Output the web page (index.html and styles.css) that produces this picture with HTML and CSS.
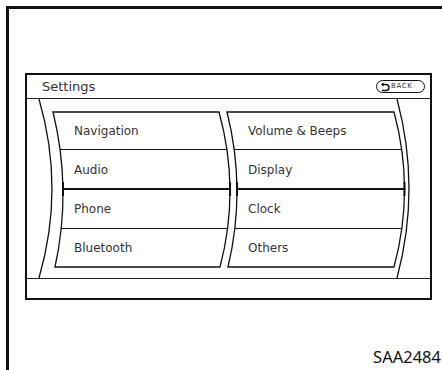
FILE: index.html
```html
<!DOCTYPE html>
<html lang="en">
<head>
    <meta charset="UTF-8">
    <meta name="viewport" content="width=device-width, initial-scale=1.0">
    <title>Settings</title>
    <link rel="stylesheet" href="styles.css">
</head>
<body>
    <div class="frame">
        <div class="screen">
            <div class="screen-head">
                <span class="screen-title">Settings</span>
                <span class="back-btn">
                    <svg class="back-icon" viewBox="0 0 10 10" width="10" height="10">
                        <path d="M2.5 2.5 H6 A3 3 0 0 1 6 8.5 H2" fill="none" stroke="#111" stroke-width="1.4"/>
                        <path d="M0.8 2.5 L3.6 0.6 V4.4 Z" fill="#111"/>
                    </svg>
                    <span class="back-text">BACK</span>
                </span>
            </div>
            <div class="screen-body">
                <!-- drum outline, drawn under the menu text -->
                <svg class="drum" viewBox="0 0 403 179" width="403" height="179">
                    <defs>
                        <clipPath id="panels">
                            <path d="M26 13 L192 13 Q213.5 90.5 193 168 L28 168 Q45 90.5 26 13 Z"/>
                            <path d="M200 13 L367 13 Q388 90.5 367 168 L201 168 Q219.5 90.5 200 13 Z"/>
                        </clipPath>
                    </defs>
                    <g fill="none" stroke="#111">
                        <path d="M12 0 Q38 89.5 12 179" stroke-width="1.3"/>
                        <path d="M370 0 Q394 89.5 370 179" stroke-width="1.3"/>
                        <path d="M26 13 L192 13 Q213.5 90.5 193 168 L28 168 Q45 90.5 26 13 Z" stroke-width="1.3"/>
                        <path d="M200 13 L367 13 Q388 90.5 367 168 L201 168 Q219.5 90.5 200 13 Z" stroke-width="1.3"/>
                        <g clip-path="url(#panels)">
                            <line x1="0" y1="50.5" x2="403" y2="50.5" stroke-width="1"/>
                            <line x1="0" y1="90" x2="403" y2="90" stroke-width="2"/>
                            <line x1="0" y1="129.5" x2="403" y2="129.5" stroke-width="1"/>
                        </g>
                        <g stroke-width="2">
                            <line x1="36" y1="83" x2="36" y2="97"/>
                            <line x1="203" y1="83" x2="203" y2="97"/>
                            <line x1="210" y1="83" x2="210" y2="97"/>
                            <line x1="377.5" y1="83" x2="377.5" y2="97"/>
                        </g>
                    </g>
                </svg>
                <ul class="menu">
                    <li>Navigation</li>
                    <li>Audio</li>
                    <li>Phone</li>
                    <li>Bluetooth</li>
                    <li>Volume &amp; Beeps</li>
                    <li>Display</li>
                    <li>Clock</li>
                    <li>Others</li>
                </ul>
            </div>
            <div class="screen-foot"></div>
        </div>
        <p class="fig-code">SAA2484</p>
    </div>
</body>
</html>
```

FILE: styles.css
```css
* {box-sizing: border-box;}
body {
    margin: 0;
    background: #fff;
    overflow: hidden;
    font-family: "DejaVu Sans", sans-serif;
    color: #333;
}

.frame {
    margin: 6px 0 0 6px;
    height: 364px;
    border-top: 3px solid #111;
    border-left: 3px solid #111;
    padding-top: 64px;
    padding-left: 16px;
}

.screen {
    width: 407px;
    height: 227px;
    border: 2px solid #111;
    display: flex;
    flex-direction: column;
}
.screen-head {
    height: 24px;
    border-bottom: 1px solid #222;
    display: flex;
    align-items: center;
    justify-content: space-between;
    padding: 0 5px 0 15px;
}
.screen-title {font-size: 13px;}

.back-btn {
    display: flex;
    align-items: center;
    gap: 1px;
    height: 13px;
    width: 49px;
    padding: 0 3px;
    border: 1.5px solid #111;
    border-radius: 7px;
}
.back-icon {flex: none;}
.back-text {
    font-size: 7px;
    letter-spacing: 0.6px;
    line-height: 1;
}

.screen-body {
    position: relative;
    height: 179px;
}
.drum {
    position: absolute;
    left: 0;
    top: 0;
}
.menu {
    position: relative;
    list-style: none;
    margin: 0;
    height: 100%;
    padding: 13px 0 11px 47px;
    display: grid;
    grid-template-columns: 174px 1fr;
    grid-template-rows: repeat(4, 1fr);
    grid-auto-flow: column;
    align-items: center;
    font-size: 12px;
}

.screen-foot {
    flex: 1;
    border-top: 1px solid #222;
}

.fig-code {
    margin: 47px 0 0;
    padding-right: 1px;
    text-align: right;
    font-family: "Noto Sans", sans-serif;
    font-size: 16.5px;
    line-height: 20px;
    color: #111;
}
```
